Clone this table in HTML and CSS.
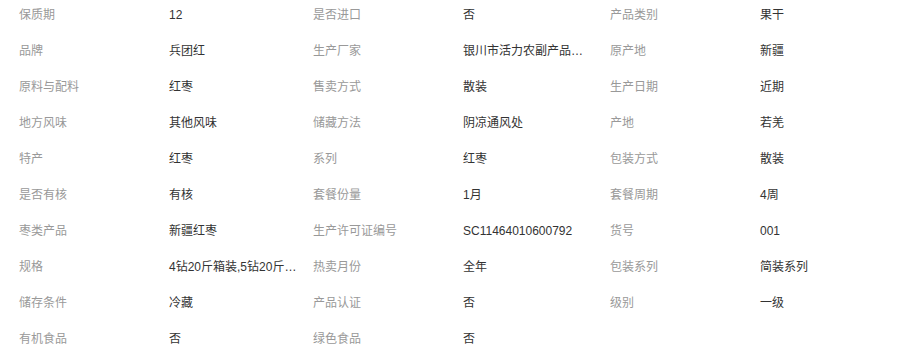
FILE: index.html
```html
<!DOCTYPE html>
<html lang="zh-CN">
<head>
<meta charset="utf-8">
<title>产品参数</title>
<link rel="stylesheet" href="styles.css">
</head>
<body>
<div class="attrs">
  <div class="k">保质期</div><div class="v">12</div>
  <div class="k">是否进口</div><div class="v">否</div>
  <div class="k">产品类别</div><div class="v">果干</div>

  <div class="k">品牌</div><div class="v">兵团红</div>
  <div class="k">生产厂家</div><div class="v" title="银川市活力农副产品有限公司">银川市活力农副产品…</div>
  <div class="k">原产地</div><div class="v">新疆</div>

  <div class="k">原料与配料</div><div class="v">红枣</div>
  <div class="k">售卖方式</div><div class="v">散装</div>
  <div class="k">生产日期</div><div class="v">近期</div>

  <div class="k">地方风味</div><div class="v">其他风味</div>
  <div class="k">储藏方法</div><div class="v">阴凉通风处</div>
  <div class="k">产地</div><div class="v">若羌</div>

  <div class="k">特产</div><div class="v">红枣</div>
  <div class="k">系列</div><div class="v">红枣</div>
  <div class="k">包装方式</div><div class="v">散装</div>

  <div class="k">是否有核</div><div class="v">有核</div>
  <div class="k">套餐份量</div><div class="v">1月</div>
  <div class="k">套餐周期</div><div class="v">4周</div>

  <div class="k">枣类产品</div><div class="v">新疆红枣</div>
  <div class="k">生产许可证编号</div><div class="v">SC11464010600792</div>
  <div class="k">货号</div><div class="v">001</div>

  <div class="k">规格</div><div class="v" title="4钻20斤箱装,5钻20斤箱装">4钻20斤箱装,5钻20斤…</div>
  <div class="k">热卖月份</div><div class="v">全年</div>
  <div class="k">包装系列</div><div class="v">简装系列</div>

  <div class="k">储存条件</div><div class="v">冷藏</div>
  <div class="k">产品认证</div><div class="v">否</div>
  <div class="k">级别</div><div class="v">一级</div>

  <div class="k">有机食品</div><div class="v">否</div>
  <div class="k">绿色食品</div><div class="v">否</div>
</div>
</body>
</html>
```

FILE: styles.css
```css
html, body {
  margin: 0;
  padding: 0;
  background: #fff;
}

body {
  font-family: "Liberation Sans", "Noto Sans CJK SC", sans-serif;
  font-size: 12px;
  overflow: hidden;
}

.attrs {
  display: grid;
  grid-template-columns: 150px 144px 150px 147px 150px 1fr;
  grid-auto-rows: 36px;
  padding-left: 19px;
  margin-top: -3px;
}

.k,
.v {
  line-height: 36px;
  white-space: nowrap;
}

.k {
  color: #999;
}

.v {
  color: #333;
}
```
